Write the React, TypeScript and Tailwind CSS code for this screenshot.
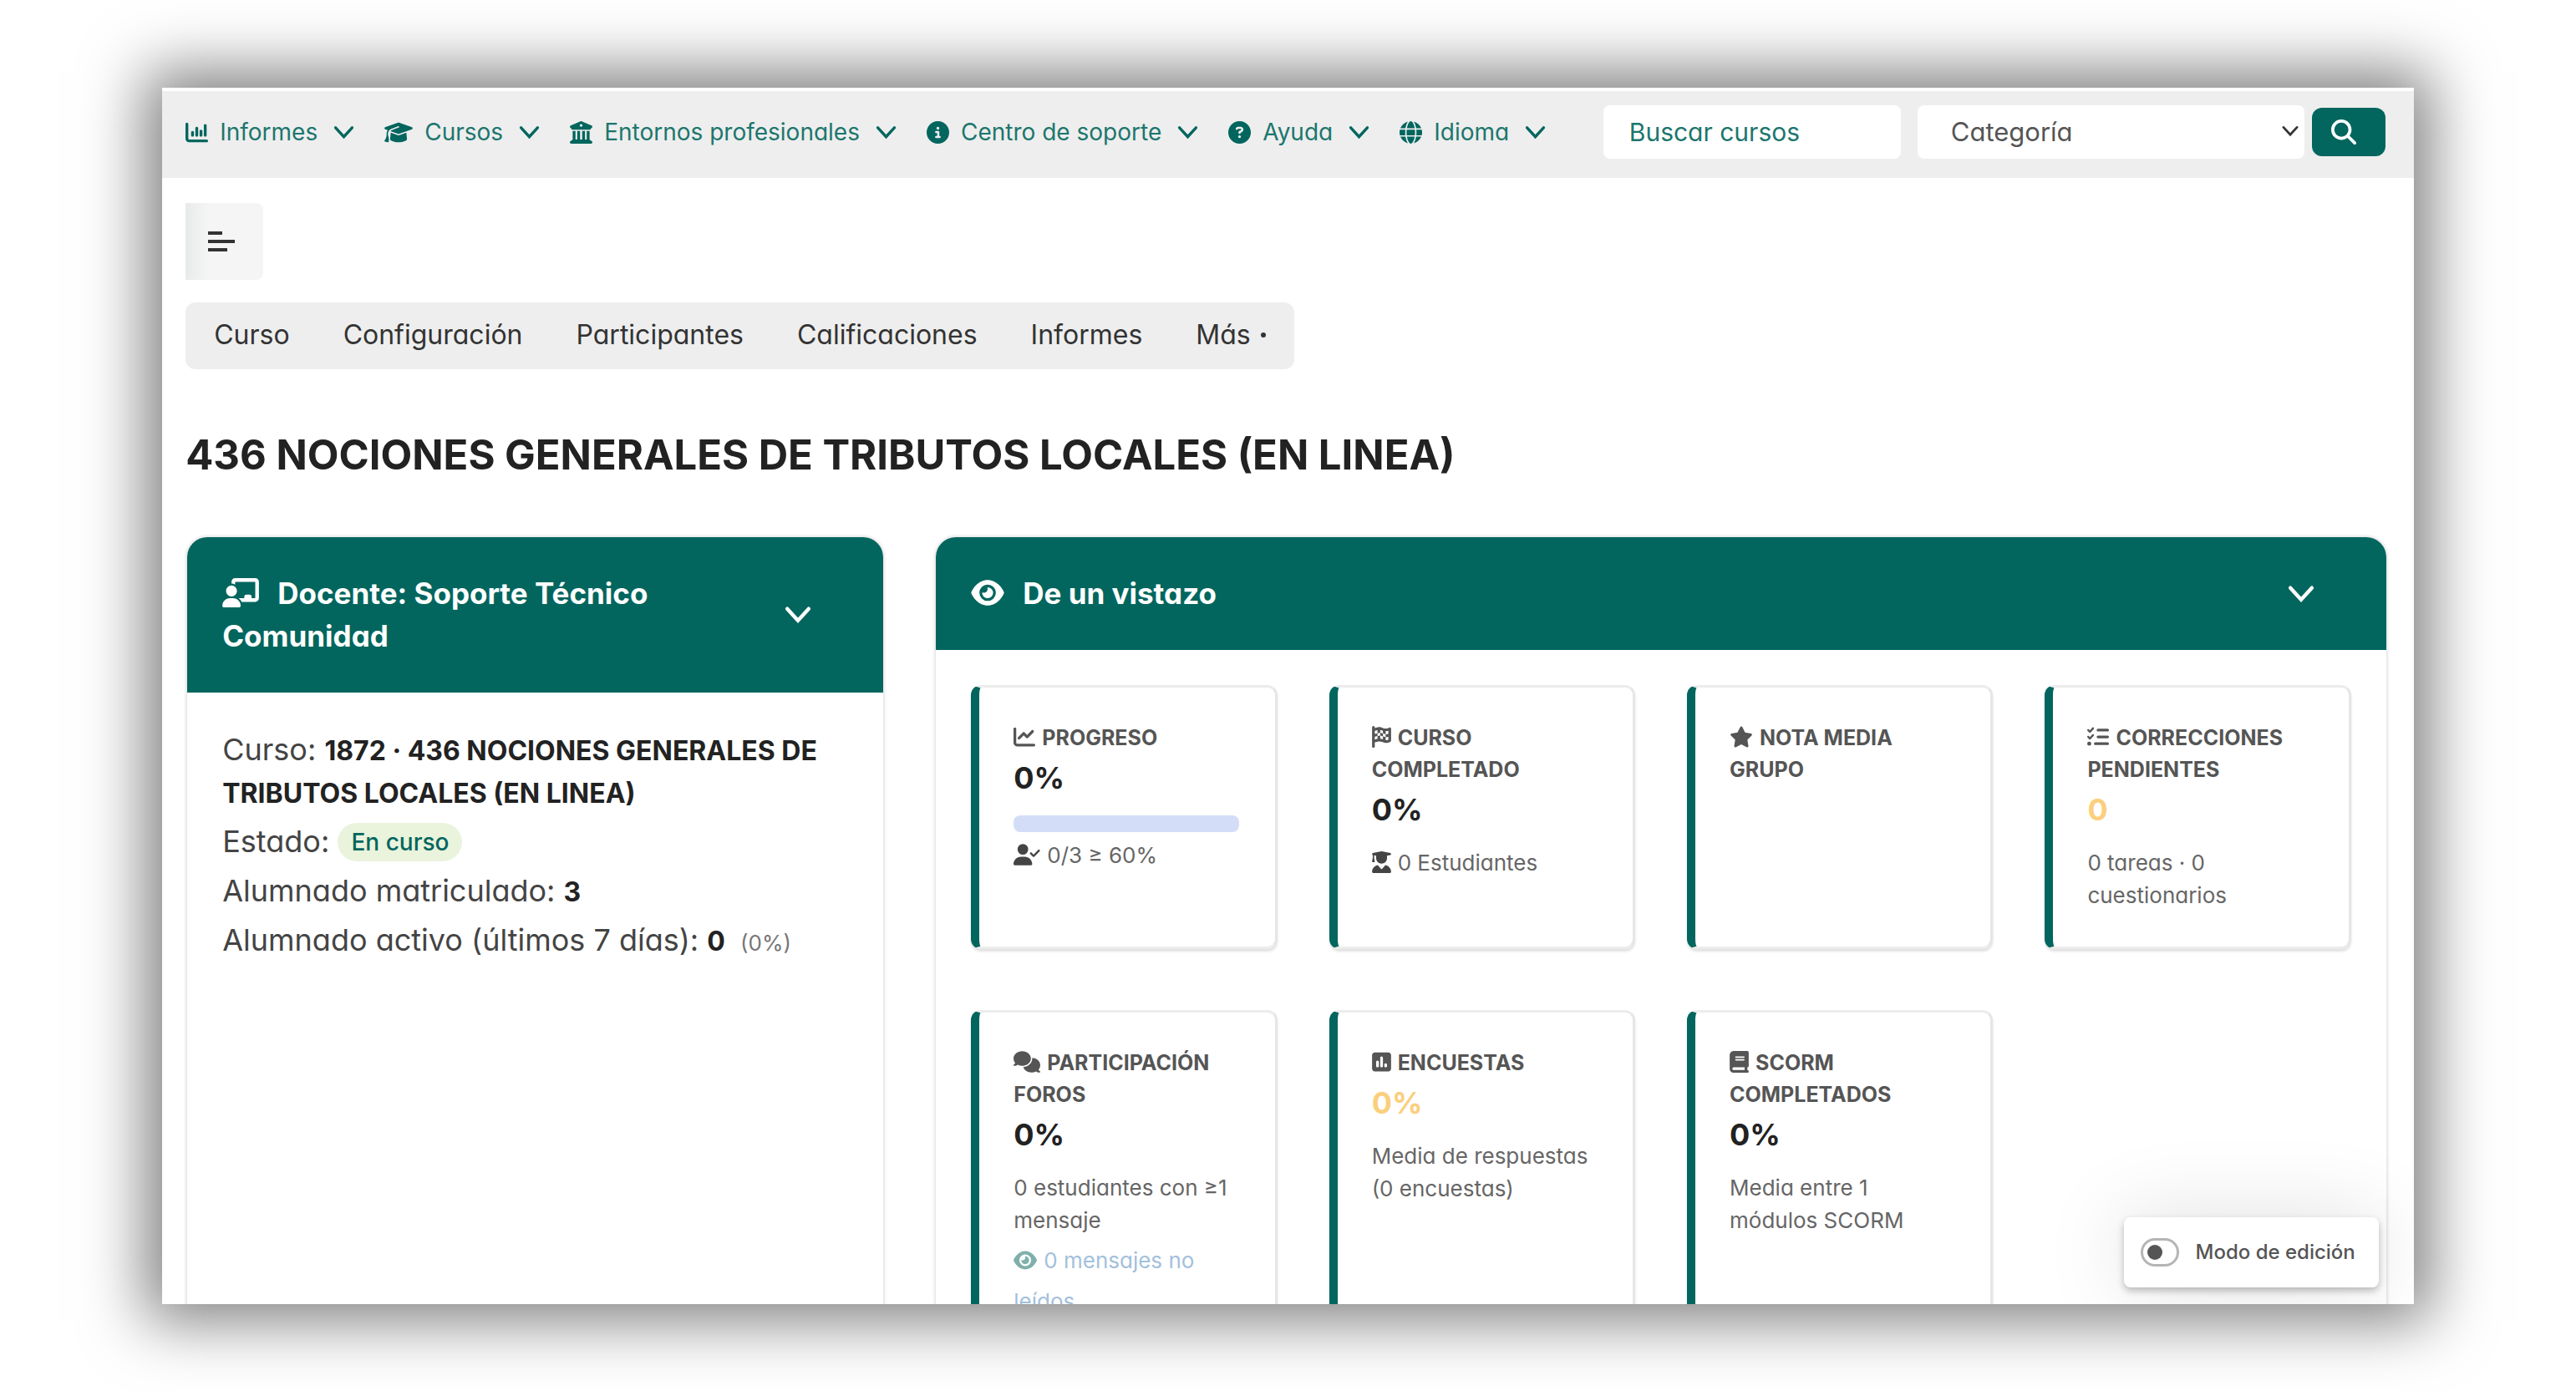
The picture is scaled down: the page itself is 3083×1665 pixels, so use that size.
import type { ReactNode } from "react";
import type { IconType } from "react-icons";
import {
  FaBook,
  FaBuildingColumns,
  FaChalkboardUser,
  FaChartColumn,
  FaChartLine,
  FaCircleInfo,
  FaCircleQuestion,
  FaComments,
  FaEye,
  FaFlagCheckered,
  FaGlobe,
  FaGraduationCap,
  FaListCheck,
  FaMagnifyingGlass,
  FaSquarePollVertical,
  FaStar,
  FaUserCheck,
  FaUserGraduate,
} from "react-icons/fa6";

const navItems: { label: string; icon: IconType; iconClass: string }[] = [
  { label: "Informes", icon: FaChartColumn, iconClass: "w-[27px]" },
  { label: "Cursos", icon: FaGraduationCap, iconClass: "w-[34px]" },
  { label: "Entornos profesionales", icon: FaBuildingColumns, iconClass: "w-[27px]" },
  { label: "Centro de soporte", icon: FaCircleInfo, iconClass: "w-[27px]" },
  { label: "Ayuda", icon: FaCircleQuestion, iconClass: "w-[27px]" },
  { label: "Idioma", icon: FaGlobe, iconClass: "w-[27px]" },
];

const tabs = ["Curso", "Configuración", "Participantes", "Calificaciones", "Informes"];

const Chevron = ({ className }: { className: string }) => (
  <svg viewBox="0 0 26 18" fill="none" className={className} aria-hidden="true">
    <path d="M2.5 3 13 14.5 23.5 3" stroke="currentColor" strokeWidth="3.6" strokeLinecap="round" />
  </svg>
);

const TopBar = () => (
  <header className="flex h-[108px] items-center justify-between border-t-4 border-white bg-[#eeeeee] pb-[6px] pl-7 pr-[34px]">
    <nav className="flex items-center gap-9">
      {navItems.map(({ label, icon: Icon, iconClass }) => (
        <button key={label} type="button" className="flex items-center whitespace-nowrap text-[28px] text-[#1c766d]">
          <Icon className={`mr-[14px] h-[27px] text-[#02665e] ${iconClass}`} />
          {label}
          <Chevron className="ml-[19px] h-[17px] w-[25px] text-[#02665e]" />
        </button>
      ))}
    </nav>
    <form className="flex items-center">
      <input
        type="text"
        aria-label="Buscar cursos"
        placeholder="Buscar cursos"
        className="h-16 w-[356px] rounded-lg bg-white px-[31px] text-[30px] placeholder:text-[#1c766d] placeholder:opacity-100"
      />
      <div className="relative ml-5">
        <select
          aria-label="Categoría"
          className="h-16 w-[463px] appearance-none rounded-lg bg-white pl-10 text-[31px] text-[#555555]"
        >
          <option>Categoría</option>
        </select>
        <Chevron className="pointer-events-none absolute right-[7px] top-6 h-[14px] w-5 text-[#333333]" />
      </div>
      <button
        type="button"
        aria-label="Buscar"
        className="ml-[9px] flex h-[58px] w-[88px] items-center justify-center rounded-xl bg-[#02665e] text-white"
      >
        <FaMagnifyingGlass className="mr-3 size-[30px]" />
      </button>
    </form>
  </header>
);

type CardHeaderProps = {
  icon: IconType;
  iconClass: string;
  children: ReactNode;
};

const CardHeader = ({ icon: Icon, iconClass, children }: CardHeaderProps) => (
  <div className="flex items-center justify-between bg-[#02665e] px-[42px] py-[42px] text-white">
    <h2 className="text-[35px] font-bold leading-[51px]">
      <Icon className={`mr-[22px] inline h-[35px] align-[-4px] ${iconClass}`} />
      {children}
    </h2>
    <button type="button" aria-label="Contraer" className="mx-11 shrink-0">
      <Chevron className="h-[22px] w-8" />
    </button>
  </div>
);

type TileProps = {
  icon: IconType;
  iconClass?: string;
  title: string;
  value?: string;
  warn?: boolean;
  children?: ReactNode;
};

const Tile = ({ icon: Icon, iconClass = "w-[26px]", title, value, warn, children }: TileProps) => (
  <article className="min-h-[316px] rounded-xl border-y-[3px] border-l-10 border-r-[3px] border-y-[#ececec] border-l-[#02665e] border-r-[#e6e6e6] bg-white pb-4 pl-[41px] pr-[43px] pt-[41px] text-[#555555] shadow-[0_3px_3px_rgba(0,0,0,0.12)]">
    <h3 className="text-[25px] font-bold leading-[38px]">
      <Icon className={`mr-2 inline h-[26px] align-[-3px] ${iconClass}`} />
      {title}
    </h3>
    {value && (
      <p className={warn ? "text-[36px] font-bold leading-[58px] text-[#fbcf7d]" : "text-[36px] font-bold leading-[58px] text-[#222222]"}>
        {value}
      </p>
    )}
    {children}
  </article>
);

const Note = ({ children }: { children: ReactNode }) => (
  <p className="mt-[15px] text-[26px] leading-[39px] text-[#666666]">{children}</p>
);

const App = () => (
  <div className="flex h-screen flex-col overflow-hidden bg-white px-[6.3%] pb-[104px] pt-[105px] font-['Inter','Noto_Sans',sans-serif] text-[#444444] [font-feature-settings:'cv11']">
    <div className="relative min-h-0 flex-1 overflow-hidden bg-white shadow-[0_0_70px_20px_rgba(0,0,0,0.5)]">
      <TopBar />
      <main className="px-7 pt-[30px]">
        <button
          type="button"
          aria-label="Abrir índice del curso"
          className="flex h-[92px] w-[93px] items-center rounded-r-lg bg-linear-to-r from-[#e8eaea] to-[#f5f5f5] to-30% pl-[27px]"
        >
          <svg viewBox="0 0 32 26" className="h-[26px] w-8" fill="#333333" aria-hidden="true">
            <rect y="1" width="17" height="4" />
            <rect y="11" width="32" height="4" />
            <rect y="21" width="23" height="4" />
          </svg>
        </button>

        <nav className="mt-[27px] flex h-20 w-fit items-center gap-16 rounded-xl bg-[#eeeeee] px-[34px] pb-[2px] text-[32px] text-[#333333]">
          {tabs.map((tab) => (
            <a key={tab} href="#">
              {tab}
            </a>
          ))}
          <button type="button" className="flex items-center gap-3">
            Más
            <span className="size-[6px] rounded-full bg-[#333333]" />
          </button>
        </nav>

        <h1 className="mt-16 text-[49px] font-bold leading-[78px] text-[#222222]">
          436 NOCIONES GENERALES DE TRIBUTOS LOCALES (EN LINEA)
        </h1>

        <div className="ml-[2px] mr-[5px] mt-[59px] grid grid-cols-[12fr_25fr] items-start gap-[63px]">
          <section className="min-h-[1100px] overflow-hidden rounded-t-3xl bg-white shadow-[0_0_3px_2px_rgba(0,0,0,0.1)]">
            <CardHeader icon={FaChalkboardUser} iconClass="w-11">
              Docente: Soporte Técnico Comunidad
            </CardHeader>
            <div className="px-[42px] pt-[43px] text-[36px] leading-[51px] [&_b]:text-[32px] [&_b]:font-bold [&_b]:leading-none [&_b]:text-[#222222]">
              <p>
                Curso: <b>1872 · 436 NOCIONES GENERALES DE TRIBUTOS LOCALES (EN LINEA)</b>
              </p>
              <p className="mt-2">
                Estado:{" "}
                <span className="inline-block rounded-full bg-[#eaf3dc] px-4 align-[2px] text-[28px] font-medium leading-[46px] text-[#02665e]">
                  En curso
                </span>
              </p>
              <p className="mt-2">
                Alumnado matriculado: <b>3</b>
              </p>
              <p className="mt-2">
                Alumnado activo (últimos 7 días): <b>0</b>{" "}
                <span className="ml-2 text-[26px] leading-none text-[#777777]">(0%)</span>
              </p>
            </div>
          </section>

          <section className="overflow-hidden rounded-t-3xl bg-white shadow-[0_0_3px_2px_rgba(0,0,0,0.1)]">
            <CardHeader icon={FaEye} iconClass="w-10">
              De un vistazo
            </CardHeader>
            <div className="grid grid-cols-4 gap-x-[62px] gap-y-[73px] p-[42px]">
              <Tile icon={FaChartLine} title="PROGRESO" value="0%">
                <div role="progressbar" aria-label="Progreso" aria-valuenow={0} className="mt-4 h-5 rounded-lg bg-[#d4ddf8]" />
                <p className="mt-2 text-[26px] leading-[39px] text-[#666666]">
                  <FaUserCheck className="mr-2 inline h-[26px] w-8 align-[-3px] text-[#444444]" />
                  0/3 ≥ 60%
                </p>
              </Tile>
              <Tile icon={FaFlagCheckered} iconClass="w-[23px]" title="CURSO COMPLETADO" value="0%">
                <Note>
                  <FaUserGraduate className="mr-2 inline h-[26px] w-[23px] align-[-3px] text-[#444444]" />
                  0 Estudiantes
                </Note>
              </Tile>
              <Tile icon={FaStar} iconClass="w-7" title="NOTA MEDIA GRUPO" />
              <Tile icon={FaListCheck} title="CORRECCIONES PENDIENTES" value="0" warn>
                <Note>0 tareas · 0 cuestionarios</Note>
              </Tile>
              <Tile icon={FaComments} iconClass="w-8" title="PARTICIPACIÓN FOROS" value="0%">
                <Note>0 estudiantes con ≥1 mensaje</Note>
                <a href="#" className="mt-1 block text-[26px] leading-[49px] text-[#a3c0dc]">
                  <FaEye className="mr-2 inline h-[25px] w-7 align-[-3px] text-[#7fb0ac]" />
                  0 mensajes no leídos
                </a>
              </Tile>
              <Tile icon={FaSquarePollVertical} iconClass="w-[23px]" title="ENCUESTAS" value="0%" warn>
                <Note>Media de respuestas (0 encuestas)</Note>
              </Tile>
              <Tile icon={FaBook} iconClass="w-[23px]" title="SCORM COMPLETADOS" value="0%">
                <Note>Media entre 1 módulos SCORM</Note>
              </Tile>
            </div>
          </section>
        </div>
      </main>

      <label className="absolute bottom-5 right-[42px] flex h-[84px] items-center gap-5 rounded-lg bg-white pl-5 pr-7 text-[24px] font-medium text-[#555555] shadow-[0_4px_8px_rgba(0,0,0,0.25),0_0_100px_rgba(0,0,0,0.13)]">
        <input type="checkbox" className="peer sr-only" />
        <span className="flex h-[34px] w-[46px] items-center rounded-full border-[3px] border-[#b5b5b5] px-[5px]">
          <span className="size-[18px] rounded-full bg-[#555555]" />
        </span>
        Modo de edición
      </label>
    </div>
  </div>
);

export default App;
